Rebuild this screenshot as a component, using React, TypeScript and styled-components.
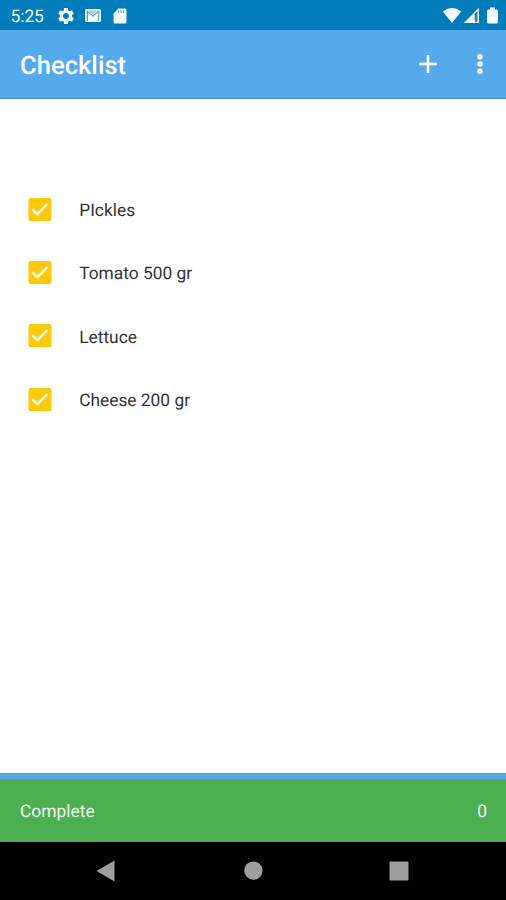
import React from "react";
import styled, { createGlobalStyle } from "styled-components";

const GlobalStyle = createGlobalStyle`
  * { box-sizing: border-box; }
  body { margin: 0; font-family: Roboto, sans-serif; text-rendering: geometricPrecision; }
  svg { display: block; flex: none; }
`;

const Screen = styled.div`
  width: 506px;
  height: 900px;
  display: flex;
  flex-direction: column;
  background: #fff;
  overflow: hidden;
`;

const StatusBar = styled.header`
  height: 30px;
  padding: 2px 7px 0 10.6px;
  display: flex;
  align-items: center;
  background: #007cba;
  color: #f4fbff;
`;

const Clock = styled.span`
  width: 45.4px;
  padding-top: 1px;
  font-size: 17.4px;
  letter-spacing: -0.1px;
`;

const StatusGroup = styled.div<{ $end?: boolean }>`
  display: flex;
  align-items: center;
  gap: ${(p) => (p.$end ? "0.5px" : "9.4px")};
  margin-left: ${(p) => (p.$end ? "auto" : 0)};
`;

const AppBar = styled.div`
  height: 68.5px;
  padding: 0 10.3px 0 20px;
  display: flex;
  align-items: center;
  background: #55aaee;
  border-bottom: 1px solid #4599d4;
  color: #fff;
`;

const Title = styled.h1`
  margin: 4px auto 0 0;
  font-size: 25.5px;
  line-height: 30px;
  font-weight: 500;
  letter-spacing: 0.05px;
`;

const IconButton = styled.button`
  width: 52px;
  height: 52px;
  padding: 0;
  border: 0;
  display: flex;
  align-items: center;
  justify-content: center;
  background: transparent;
  color: #fff;

  & + & { width: 32px; margin-left: 10px; }
`;

const List = styled.ul`
  flex: 1;
  margin: 0;
  padding: 79px 0 0;
  list-style: none;
`;

const Item = styled.li`
  height: 63.3px;
  padding-left: 28px;
  display: flex;
  align-items: center;
  gap: 27.2px;
`;

const ItemLabel = styled.span`
  padding-top: 4px;
  font-size: 17.35px;
  line-height: 22px;
  color: #333;
`;

const Footer = styled.footer`
  height: 69px;
  padding: 3.5px 19px 0 20px;
  display: flex;
  align-items: center;
  justify-content: space-between;
  border-top: 6px solid #55a9ea;
  background: #4caf50;
  color: #f4fff4;
  font-size: 17.4px;
`;

const NavBar = styled.nav`
  height: 58.5px;
  padding: 0 97px 0 96px;
  display: flex;
  align-items: center;
  justify-content: space-between;
  background: #000;
  color: #9e9e9e;
`;

const items = ["PIckles", "Tomato 500 gr", "Lettuce", "Cheese 200 gr"];

const CheckedBox = () => (
  <svg width="24" height="23" viewBox="0 0 24 23">
    <rect x=".5" width="23" height="23" rx="2.6" fill="#ffc90a" />
    <path d="M4.2 11.2 9.3 16.2 19.6 5.9" fill="none" stroke="#fffbe6" strokeWidth="2.4" />
  </svg>
);

export default function App() {
  return (
    <Screen>
      <GlobalStyle />
      <StatusBar>
        <Clock>5:25</Clock>
        <StatusGroup>
          <svg width="20" height="20" viewBox="0 0 24 24" fill="currentColor">
            <path d="M19.14 12.94c.04-.3.06-.61.06-.94 0-.32-.02-.64-.07-.94l2.03-1.58c.18-.14.23-.41.12-.61l-1.92-3.32c-.12-.22-.37-.29-.59-.22l-2.39.96c-.5-.38-1.03-.7-1.62-.94l-.36-2.54c-.04-.24-.24-.41-.48-.41h-3.84c-.24 0-.43.17-.47.41l-.36 2.54c-.59.24-1.13.57-1.62.94l-2.39-.96c-.22-.08-.47 0-.59.22L2.74 8.87c-.12.21-.08.47.12.61l2.03 1.58c-.05.3-.09.63-.09.94s.02.64.07.94l-2.03 1.58c-.18.14-.23.41-.12.61l1.92 3.32c.12.22.37.29.59.22l2.39-.96c.5.38 1.03.7 1.62.94l.36 2.54c.05.24.24.41.48.41h3.84c.24 0 .44-.17.47-.41l.36-2.54c.59-.24 1.13-.56 1.62-.94l2.39.96c.22.08.47 0 .59-.22l1.92-3.32c.12-.22.07-.47-.12-.61l-2.01-1.58zM12 15.6c-1.98 0-3.6-1.62-3.6-3.6s1.62-3.6 3.6-3.6 3.6 1.62 3.6 3.6-1.62 3.6-3.6 3.6z" />
          </svg>
          <svg width="16" height="16" viewBox="0 0 16 16">
            <rect y="1" width="16" height="13" rx="1.5" fill="#f4fbff" />
            <path d="M2.4 12.8V3.4L8 8l5.6-4.6v9.4" fill="none" stroke="#4b9fca" strokeWidth="1.2" />
            <path d="M3 2.4h10L8 6.2Z" fill="#9fcee5" />
          </svg>
          <svg width="18" height="16" viewBox="0 0 18 16">
            <path d="M7.5.5H14q1.5 0 1.5 1.5v12q0 1.5-1.5 1.5H4Q2.5 15.5 2.5 14V5.5Z" fill="currentColor" />
            <path d="M7.5 2.5v2.6M10 2.5v2.6M12.5 2.5v2.6" stroke="#59a9d0" strokeWidth="1.1" />
          </svg>
        </StatusGroup>
        <StatusGroup $end>
          <svg width="20" height="18" viewBox="0 0 20 18" fill="currentColor">
            <path d="M.8 4.4Q10-2.4 19.2 4.4L10 16Z" />
          </svg>
          <svg width="18" height="18" viewBox="0 0 18 18" fill="currentColor">
            <path fillRule="evenodd" d="M.8 16 16 .7V16ZM11.7 6.7v8h2.8V3.9Z" />
            <path d="M12.6 8.2h1v5.6h-1z" opacity=".25" />
          </svg>
          <svg width="18" height="18" viewBox="0 0 18 18" fill="currentColor">
            <path d="M9 .5h5v2h1.5Q17 2.5 17 4v11q0 1.5-1.5 1.5h-8Q6 16.5 6 15V4q0-1.5 1.5-1.5H9Z" />
          </svg>
        </StatusGroup>
      </StatusBar>
      <AppBar>
        <Title>Checklist</Title>
        <IconButton aria-label="Add item">
          <svg width="18" height="18" viewBox="0 0 18 18">
            <path d="M9 0v18M0 9h18" stroke="currentColor" strokeWidth="2.6" />
          </svg>
        </IconButton>
        <IconButton aria-label="More options">
          <svg width="6" height="22" viewBox="0 0 6 22" fill="currentColor">
            <circle cx="3" cy="3.7" r="2.7" />
            <circle cx="3" cy="11" r="2.7" />
            <circle cx="3" cy="18.3" r="2.7" />
          </svg>
        </IconButton>
      </AppBar>
      <List>
        {items.map((label) => (
          <Item key={label}>
            <CheckedBox />
            <ItemLabel>{label}</ItemLabel>
          </Item>
        ))}
      </List>
      <Footer>
        <span>Complete</span>
        <span>0</span>
      </Footer>
      <NavBar>
        <svg width="19" height="22" viewBox="0 0 19 22" fill="currentColor">
          <path d="M.5 11 18.5 .5v21Z" />
        </svg>
        <svg width="21" height="19" viewBox="0 0 21 19" fill="currentColor">
          <circle cx="11.4" cy="9.6" r="9.2" />
        </svg>
        <svg width="20" height="20" viewBox="0 0 20 20" fill="currentColor">
          <rect x=".5" y=".5" width="19" height="19" rx="1" />
        </svg>
      </NavBar>
    </Screen>
  );
}
